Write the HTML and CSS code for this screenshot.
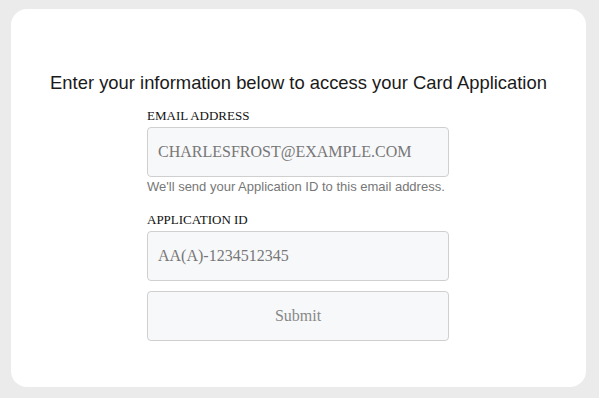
FILE: index.html
```html
<!DOCTYPE html>
<html>
<head>
<meta charset="utf-8">
<link rel="stylesheet" href="styles.css">
</head>
<body>
<div class="card">
  <h1 class="title">Enter your information below to access your Card Application</h1>
  <form class="form">
    <label class="label">EMAIL ADDRESS</label>
    <div class="input">CHARLESFROST@EXAMPLE.COM</div>
    <p class="help">We'll send your Application ID to this email address.</p>
    <label class="label label-second">APPLICATION ID</label>
    <div class="input">AA(A)-1234512345</div>
    <div class="button">Submit</div>
  </form>
</div>
</body>
</html>
```
FILE: styles.css
```css
html, body {
  margin: 0;
  padding: 0;
  background: #ebebeb;
}
body {
  padding: 9px 13px 11px 11px;
  width: 599px;
  height: 398px;
  box-sizing: border-box;
}
.card {
  background: #fff;
  border-radius: 16px;
  height: 378px;
  box-sizing: border-box;
  padding-top: 62px;
  display: flex;
  flex-direction: column;
  align-items: center;
}
.title {
  margin: 0;
  font-family: "Liberation Sans", Arial, sans-serif;
  font-weight: normal;
  font-size: 18.4px;
  line-height: 24px;
  color: #1a1a1a;
}
.form {
  width: 302px;
  margin-top: 13px;
  margin-right: 1px;
  display: flex;
  flex-direction: column;
}
.label {
  font-family: "Liberation Serif", "Times New Roman", serif;
  font-size: 13px;
  line-height: 16px;
  color: #111;
  height: 16px;
}
.label-second {
  margin-top: 17px;
}
.input, .button {
  margin-top: 3px;
  height: 50px;
  box-sizing: border-box;
  border: 1px solid #cfcfcf;
  border-radius: 4px;
  background: #f7f8fa;
  font-family: "Liberation Serif", "Times New Roman", serif;
  font-size: 16px;
  color: #777;
  display: flex;
  align-items: center;
  padding-left: 10px;
}
.button {
  margin-top: 10px;
  justify-content: center;
  padding-left: 0;
  color: #888;
}
.help {
  margin: 2px 0 0 0;
  font-family: "Liberation Sans", Arial, sans-serif;
  font-size: 13px;
  line-height: 16px;
  color: #777;
}
```
